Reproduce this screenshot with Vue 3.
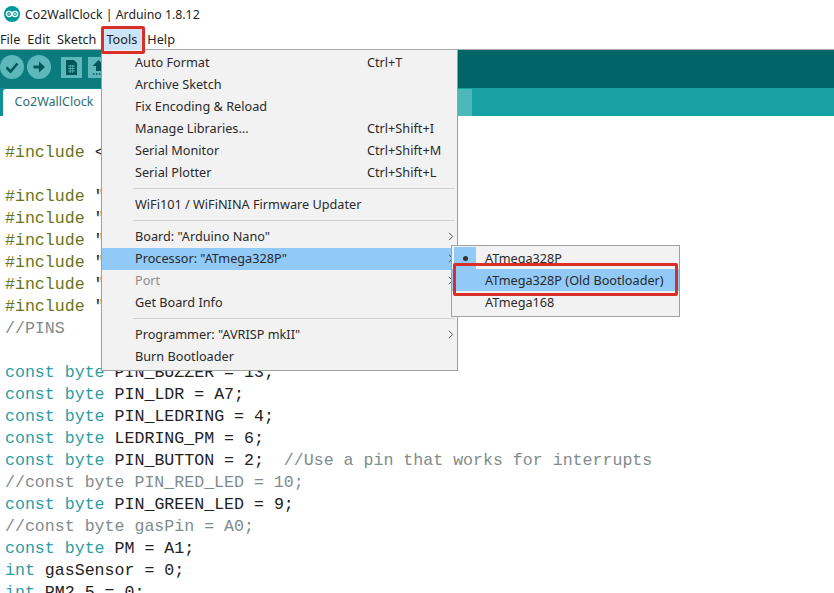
<script setup>
const menus = ['File', 'Edit', 'Sketch', 'Tools', 'Help']
const includes = Array.from({ length: 6 }, () => '"')
const groups = [
  [
    { label: 'Auto Format', key: 'Ctrl+T' },
    { label: 'Archive Sketch' },
    { label: 'Fix Encoding & Reload' },
    { label: 'Manage Libraries...', key: 'Ctrl+Shift+I' },
    { label: 'Serial Monitor', key: 'Ctrl+Shift+M' },
    { label: 'Serial Plotter', key: 'Ctrl+Shift+L' }
  ],
  [{ label: 'WiFi101 / WiFiNINA Firmware Updater' }],
  [
    { label: 'Board: "Arduino Nano"', arrow: true },
    { label: 'Processor: "ATmega328P"', arrow: true, active: true },
    { label: 'Port', arrow: true, disabled: true },
    { label: 'Get Board Info' }
  ],
  [
    { label: 'Programmer: "AVRISP mkII"', arrow: true },
    { label: 'Burn Bootloader' }
  ]
]
const gap = '  '
</script>

<template>
  <div class="app">
    <header class="title">
      <svg class="logo" width="16" height="16" viewBox="0 0 16 16">
        <circle cx="8" cy="8" r="8" fill="#00979c" />
        <circle cx="5" cy="8" r="2.6" fill="none" stroke="#fff" stroke-width="1.3" />
        <circle cx="11" cy="8" r="2.6" fill="none" stroke="#fff" stroke-width="1.3" />
        <path d="M3.8 8h2.4M9.8 8h2.4M11 6.9v2.2" stroke="#fff" stroke-width=".8" />
      </svg>
      <span>Co2WallClock | Arduino 1.8.12</span>
    </header>

    <nav class="menubar">
      <span v-for="m in menus" :key="m" class="menu" :class="{ open: m === 'Tools' }">{{ m }}</span>
    </nav>

    <div class="toolbar">
      <svg class="tool" width="24" height="24" viewBox="0 0 24 24">
        <circle cx="12" cy="12" r="12" fill="#5cb8ba" />
        <path d="M6.5 12.5l4 4 7-8" fill="none" stroke="#00565a" stroke-width="2.6" />
      </svg>
      <svg class="tool" width="24" height="24" viewBox="0 0 24 24">
        <circle cx="12" cy="12" r="12" fill="#5cb8ba" />
        <path d="M6.500 10.500h5.500v-4l6 5.500-6 5.500v-4H6.500z" fill="#00565a" />
      </svg>
      <svg class="tool square page" width="21" height="21" viewBox="0 0 21 21">
        <rect width="21" height="21" fill="#5cb8ba" />
        <path d="M5 3h8l3 3v12H5z" fill="#00565a" />
        <path d="M7 9h7M7 11.500h7M7 14h7M9.300 8v8M11.700 8v8" stroke="#5cb8ba" stroke-width=".8" />
      </svg>
      <svg class="tool square" width="21" height="21" viewBox="0 0 21 21">
        <rect width="21" height="21" fill="#5cb8ba" />
        <path d="M10.500 3l6 6h-3.500v5h-5V9H4.500z" fill="#00565a" />
        <path d="M5 17h11" stroke="#00565a" stroke-width="1.500" stroke-dasharray="1.500 1.500" />
      </svg>
    </div>

    <div class="tabs">
      <div class="tab">Co2WallClock</div>
      <div class="tab-end"></div>
    </div>

    <main class="code">
      <div class="line"><span class="inc">#include</span> &lt;</div>
      <div class="line">&nbsp;</div>
      <div v-for="(q, i) in includes" :key="i" class="line"><span class="inc">#include</span> {{ q }}</div>
      <div class="line cm">//PINS</div>
      <div class="line">&nbsp;</div>
      <div class="line"><span class="kw">const byte</span> PIN_BUZZER = 13;</div>
      <div class="line"><span class="kw">const byte</span> PIN_LDR = A7;</div>
      <div class="line"><span class="kw">const byte</span> PIN_LEDRING = 4;</div>
      <div class="line"><span class="kw">const byte</span> LEDRING_PM = 6;</div>
      <div class="line"><span class="kw">const byte</span> PIN_BUTTON = 2;{{ gap }}<span class="cm">//Use a pin that works for interrupts</span></div>
      <div class="line cm">//const byte PIN_RED_LED = 10;</div>
      <div class="line"><span class="kw">const byte</span> PIN_GREEN_LED = 9;</div>
      <div class="line cm">//const byte gasPin = A0;</div>
      <div class="line"><span class="kw">const byte</span> PM = A1;</div>
      <div class="line"><span class="kw">int</span> gasSensor = 0;</div>
      <div class="line"><span class="kw">int</span> PM2_5 = 0;</div>
    </main>

    <div class="dropdown">
      <div v-for="(g, gi) in groups" :key="gi" class="group">
        <div
          v-for="it in g"
          :key="it.label"
          class="item"
          :class="{ active: it.active, disabled: it.disabled }"
        >
          <span class="label">{{ it.label }}</span>
          <span v-if="it.key" class="key">{{ it.key }}</span>
          <svg v-if="it.arrow" class="arrow" width="6" height="9" viewBox="0 0 6 9">
            <path d="M1 .8l3.600 3.700L1 8.200" fill="none" stroke="#555" stroke-width="1" />
          </svg>
        </div>
      </div>
    </div>

    <div class="submenu">
      <div class="sub-item">
        <span class="check"><i></i></span>
        <span>ATmega328P</span>
      </div>
      <div class="sub-item hot"><span class="check"></span><span>ATmega328P (Old Bootloader)</span></div>
      <div class="sub-item"><span class="check"></span><span>ATmega168</span></div>
    </div>

    <div class="mark mark-tools"></div>
    <div class="mark mark-sub"></div>
  </div>
</template>

<style scoped>
.app {
  position: relative;
  width: 834px;
  height: 593px;
  overflow: hidden;
  background: #fff;
  color: #222;
  font-family: "Noto Sans", "Open Sans", sans-serif;
  font-size: 12.700px;
}
.title {
  height: 28px;
  display: flex;
  align-items: center;
  gap: 5px;
  padding-left: 4px;
  font-size: 12.300px;
}
.menubar {
  display: flex;
  align-items: center;
  padding-top: 1px;
  box-sizing: content-box;
  border-bottom: 1px solid #a9a9a9;
  height: 20px;
}
.menu {
  padding: 0 4px 0 3px;
  height: 22px;
  line-height: 22px;
}
.menu:first-child { padding-left: 0; }
.menu.open {
  background: #cce4f7;
  padding: 0 5px;
  margin: 0 2px 0 1px;
}
.toolbar {
  height: 38px;
  background: linear-gradient(to right, #0b7b7e 200px, #006468 200px);
  display: flex;
  align-items: flex-start;
  gap: 3px;
  padding-top: 5px;
  box-sizing: border-box;
}
.tool { flex: none; }
.square { margin-top: 2px; }
.page { margin: 2px 3px 0 7px; }
.tabs {
  height: 28px;
  background: linear-gradient(to right, #0e8f92 200px, #17a1a5 200px);
  position: relative;
  display: flex;
  align-items: flex-end;
  padding-left: 3px;
}
.tab {
  width: 100px;
  height: 27px;
  background: #fff;
  color: #2d6f73;
  font-size: 12.500px;
  line-height: 25px;
  text-align: center;
  box-sizing: border-box;
  border-radius: 3px 3px 0 0;
  padding-left: 2px;
}
.tab-end {
  position: absolute;
  left: 444px;
  top: 1px;
  width: 28px;
  height: 27px;
  background: #4db8ba;
}
.code {
  padding: 26px 0 0 5px;
  font-family: "Liberation Mono", monospace;
  font-size: 16.600px;
  line-height: 22px;
  color: #222;
  white-space: pre;
}
.line { height: 22px; }
.inc { color: #66751a; }
.kw { color: #2c9ea2; }
.cm { color: #7f8c8d; }
.dropdown {
  position: absolute;
  left: 101px;
  top: 50px;
  width: 357px;
  height: 321px;
  box-sizing: border-box;
  border: 1px solid #a0a0a0;
  border-top: 0;
  background: #f2f2f2;
  padding-top: 2px;
}
.group + .group {
  margin-top: 4px;
  padding-top: 6px;
  position: relative;
}
.group + .group::before {
  content: "";
  position: absolute;
  left: 31px;
  right: 2px;
  top: 0;
  height: 1px;
  background: #d2d2d2;
}
.item {
  position: relative;
  height: 22px;
  line-height: 20px;
  padding-left: 33px;
  color: #2a2a2a;
}
.item.active { background: #91c9f7; }
.item.disabled { color: #8d8d8d; }
.key {
  position: absolute;
  left: 265px;
  top: 0;
}
.arrow {
  position: absolute;
  right: 3px;
  top: 6px;
}
.submenu {
  position: absolute;
  left: 451px;
  top: 245px;
  width: 229px;
  height: 72px;
  box-sizing: border-box;
  border: 1px solid #a0a0a0;
  background: #f2f2f2;
  padding-top: 1px;
}
.sub-item {
  height: 22px;
  line-height: 22px;
  display: flex;
  color: #2a2a2a;
}
.sub-item.hot { background: #91c9f7; }
.check {
  width: 22px;
  margin-left: 2px;
  margin-right: 9px;
  height: 22px;
  display: flex;
  align-items: center;
  justify-content: center;
}
.sub-item:first-child .check { background: #91c9f7; }
.check i {
  width: 5px;
  height: 5px;
  border-radius: 50%;
  background: #333;
}
.mark {
  position: absolute;
  border: 3px solid #d92f27;
  border-radius: 2px;
  box-sizing: border-box;
}
.mark-tools {
  left: 101px;
  top: 26px;
  width: 44px;
  height: 28px;
}
.mark-sub {
  left: 453px;
  top: 263px;
  width: 225px;
  height: 33px;
}
</style>
